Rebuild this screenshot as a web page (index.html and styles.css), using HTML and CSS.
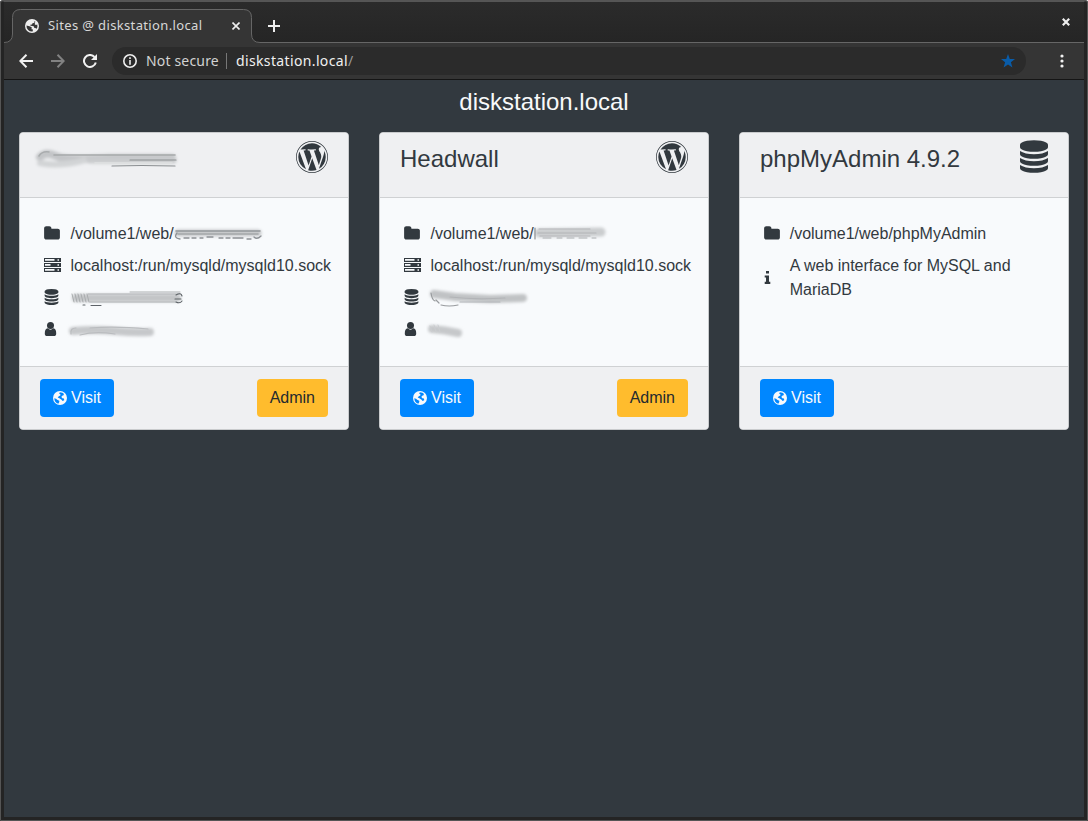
FILE: index.html
```
<!DOCTYPE html>
<html lang="en">
<head>
<meta charset="utf-8">
<title>Sites @ diskstation.local</title>
<link rel="stylesheet" href="styles.css">
</head>
<body>
<svg class="defs" width="0" height="0">
  <defs>
    <filter id="soft" filterUnits="userSpaceOnUse" x="0" y="100" width="700" height="260"><feGaussianBlur stdDeviation="1.7"/></filter>
    <filter id="fine" filterUnits="userSpaceOnUse" x="0" y="100" width="700" height="260"><feGaussianBlur stdDeviation="0.55"/></filter>
    <symbol id="i-globe" viewBox="0 0 14 14"><path fill-rule="evenodd" d="M7 0a7 7 0 1 1 0 14A7 7 0 0 1 7 0zM1.500 6.500L4.500 7.300 6.700 8.300 6.500 10.200 8 10.400 7.600 12.500A5.500 5.500 0 0 1 1.500 6.500zM8.200 1.700L9.400 2.200 9.500 3.800 7.500 4.300 7 5.500 5.300 5.800 5.500 6.800 8.700 7.200 9.400 8.900 11.200 9.200 11.600 9.900A5.500 5.500 0 0 0 12.300 5.500L10.900 6.100 9.700 5.200 10.300 2.600z"/></symbol>
    <symbol id="i-earth" viewBox="0 0 14 14"><path fill-rule="evenodd" d="M7 0a7 7 0 1 1 0 14A7 7 0 0 1 7 0zM1.300 7.200L3 7.700 4.600 9 6.300 9.700 6.300 11 5.300 12.700A6 6 0 0 1 1.300 7.200zM6.800 1.200L9.500 1.700 11 3.100 10.300 4.500 9 4.700 8.400 6 9.300 7.200 11 7.500 11.200 9.300 9.600 10.100 8.300 8.400 6.300 7.300 4.700 6.500 5.800 5.200 7.300 4.600 7.600 3.400 6.200 2.700z"/></symbol>
    <symbol id="i-folder" viewBox="0 0 1664 1792"><path d="M1664 608v704q0 92-66 158t-158 66H224q-92 0-158-66T0 1312V352q0-92 66-158t158-66h320q92 0 158 66t66 158v32h672q92 0 158 66t66 158z"/></symbol>
    <symbol id="i-server" viewBox="0 0 17 14"><path fill-rule="evenodd" d="M0 0h17v4H0zM0 5h17v4H0zM0 10h17v4H0zM1 1v1.800h9.500V1zM1 6v1.800h5.500V6zM1 11v1.800h9.500V11zM13.500 1.200v1.500H15V1.200zM13.500 6.200v1.500H15V6.200zM13.500 11.200v1.500H15v-1.500z"/></symbol>
    <symbol id="i-database" viewBox="0 0 1536 1792"><path d="M768 768q237 0 443-43t325-127v170q0 69-103 128t-280 93.500-385 34.500-385-34.500-280-93.500-103-128V598q119 84 325 127t443 43zm0 768q237 0 443-43t325-127v170q0 69-103 128t-280 93.500-385 34.500-385-34.500-280-93.500-103-128v-170q119 84 325 127t443 43zm0-384q237 0 443-43t325-127v170q0 69-103 128t-280 93.500-385 34.500-385-34.500-280-93.500-103-128V982q119 84 325 127t443 43zM768 0q208 0 385 34.500t280 93.500 103 128v128q0 69-103 128t-280 93.500-385 34.500-385-34.500-280-93.500-103-128V256q0-69 103-128t280-93.500T768 0z"/></symbol>
    <symbol id="i-user" viewBox="0 0 12 14"><circle cx="6" cy="3.500" r="3.500"/><path d="M3.100 6.300Q6 9 8.900 6.300 11.700 6.600 11.700 11.400 11.700 14 9.300 14H2.700Q.3 14 .3 11.400.3 6.600 3.100 6.300z"/></symbol>
    <symbol id="i-info" viewBox="0 0 6 13"><path d="M1.500 0h3v2.600h-3zM.2 4.400h4.300v6.400H5.800V13H.2v-2.200h1.300V6.500H.2z"/></symbol>
    <symbol id="i-wordpress" viewBox="0 0 1792 1792"><path d="M127 896q0-163 67-313l367 1005q-196-95-315-281t-119-411zm1288-39q0 19-2.500 38.500t-10 49.500-11.500 44-17.500 59-17.500 58l-76 256-278-826q46-3 88-8 19-2 26-18.500t-2.500-31-28.500-13.500l-205 10q-75-1-202-10-12-1-20.500 5t-11.500 15-1.500 18.500 9 16.500 19.500 8l80 8 120 328-168 504-280-832q46-3 88-8 19-2 26-18.500t-2.500-31-28.500-13.500l-205 10q-7 0-23-.500t-26-.500q105-160 274.500-253.500t367.500-93.500q147 0 280.500 53t238.500 149h-10q-55 0-92 40.500t-37 95.500q0 12 2 24t4 21.500 8 23 9 21 12 22.500 12.500 21 14.500 24 14 23q63 107 63 212zm-506 106l237 647q1 6 5 11-126 44-255 44-112 0-217-32zm661-436q95 174 95 369 0 209-104 385.500t-279 278.500l235-678q59-169 59-276 0-42-6-79zM896 0q182 0 348 71t286 191 191 286 71 348-71 348-191 286-286 191-348 71-348-71-286-191-191-286T0 896t71-348 191-286T548 71 896 0zm0 1751q173 0 331.500-68t273-182.500 182.500-273 68-331.500-68-331.500-182.500-273-273-182.500T896 41t-331.500 68-273 182.500-182.500 273T41 896t68 331.500 182.500 273 273 182.500 331.500 68z"/></symbol>
  </defs>
</svg>
<div class="window">
  <header class="tabstrip">
    <svg class="tab-shape" width="1080" height="41" viewBox="4 2 1080 41"><path class="tab-fill" d="M4 43V42.500Q12.500 42.500 12.500 34V17.500Q12.500 9.500 20.500 9.500H243.500Q251.500 9.500 251.500 17.500V34Q251.500 42.500 260 42.500V43z"/><path class="tab-line" d="M4 42.500Q12.500 42.500 12.500 34V17.500Q12.500 9.500 20.500 9.500H243.500Q251.500 9.500 251.500 17.500V34Q251.500 42.500 260 42.500H1084"/></svg>
    <div class="tab">
      <svg class="tab-icon"><use href="#i-globe"/></svg>
      <span class="tab-title">Sites @ diskstation.local</span>
      <svg class="tab-close" viewBox="0 0 8 8"><path d="M.5.500l7 7M7.500.500l-7 7"/></svg>
    </div>
    <svg class="new-tab" viewBox="0 0 12 12"><path d="M6 0v12M0 6h12"/></svg>
    <svg class="win-close" viewBox="0 0 8 8"><path d="M.8.800l6.400 6.400M7.200.800L.8 7.200"/></svg>
  </header>
  <nav class="toolbar">
    <svg class="nav-icon" viewBox="0 0 14 14"><path d="M14 7H1.500M7.500.800L1.300 7l6.200 6.200"/></svg>
    <svg class="nav-icon dim" viewBox="0 0 14 14"><path d="M0 7h12.500M6.500.800L12.700 7l-6.200 6.200"/></svg>
    <svg class="nav-icon" viewBox="0 0 14 14"><path d="M11.500 3A6 6 0 1 0 12.800 8.500"/><path class="solid" d="M14 0v6H8z"/></svg>
    <div class="omnibox">
      <svg class="info" viewBox="0 0 14 14"><circle cx="7" cy="7" r="6.200"/><path d="M7 3.200v1.700M7 6v4.800"/></svg>
      <span class="secure">Not secure</span>
      <span class="sep"></span>
      <span class="url">diskstation.local<i>/</i></span>
      <svg class="star" viewBox="0 0 14 14"><path d="M7 0l1.800 5H14L9.900 8.300l1.500 5.200L7 10.400l-4.400 3.100 1.500-5.200L0 5h5.200z"/></svg>
    </div>
    <svg class="menu" viewBox="0 0 4 14"><circle cx="2" cy="2" r="1.600"/><circle cx="2" cy="7" r="1.600"/><circle cx="2" cy="12" r="1.600"/></svg>
  </nav>
  <main class="page">
    <h1>diskstation.local</h1>
    <div class="cards">
      <section class="card">
        <div class="card-head">
          <h2><svg class="smudge title-smudge" width="160" height="36" viewBox="30 141 160 36"><g filter="url(#soft)"><path d="M40 157Q46 151 56 156T110 158H172" stroke="#c3c5c7" stroke-width="8"/><path d="M40 163Q60 167 85 160" stroke="#d2d4d6" stroke-width="6"/><path d="M90 160H173" stroke="#c9cbcd" stroke-width="7"/></g><g filter="url(#fine)"><path d="M39 156Q42 151 49 152" stroke="#a9acae" stroke-width="1.500"/><path d="M54 155H175" stroke="#a6a9ab" stroke-width="1.600"/><path d="M130 160H176M112 166Q140 165 175 166" stroke="#8b8f92" stroke-width="1.200"/><path d="M95 163H172" stroke="#dfe1e2" stroke-width="1.500"/></g></svg></h2>
          <svg class="brand"><use href="#i-wordpress"/></svg>
        </div>
        <div class="card-body">
          <div class="row"><svg class="folder"><use href="#i-folder"/></svg><span>/volume1/web/<svg class="smudge inline-smudge" width="94" height="20" viewBox="172 224 94 20"><g filter="url(#soft)"><path d="M178 233H258" stroke="#c6c8ca" stroke-width="7"/></g><g filter="url(#fine)"><path d="M176 231H260" stroke="#93979a" stroke-width="1.500"/><path d="M178 234H258" stroke="#a5a8aa" stroke-width="1.500"/><path d="M177 233Q173 238 180 239M184 238h5M192 238h4M200 238h3M207 237h6M219 238h4M226 238h4M233 238h10M247 239h4M254 237q3 3 7-1" stroke="#8d9195" stroke-width="1.300"/></g></svg></span></div>
          <div class="row"><svg class="server"><use href="#i-server"/></svg><span>localhost:/run/mysqld/mysqld10.sock</span></div>
          <div class="row"><svg class="db"><use href="#i-database"/></svg><svg class="smudge" width="125" height="24" viewBox="66 286 125 24"><g filter="url(#soft)"><path d="M76 298H177" stroke="#c3c5c7" stroke-width="8"/></g><g filter="url(#fine)"><path d="M72 294l2 8M75 294l2 8M78 294l2 8M81 294l2 8M84 294l2 8M87 294l2 8" stroke="#a9acae" stroke-width="1"/><path d="M88 294H180M90 302H176M130 292H180" stroke="#aeb1b3" stroke-width="1"/><path d="M83 305h2M91 305.500h10M176 295q5-3 6 1M175 299h6M176 302q4 2 6-1" stroke="#5d6267" stroke-width="1.100"/></g></svg></div>
          <div class="row"><svg class="user"><use href="#i-user"/></svg><svg class="smudge" width="125" height="24" viewBox="66 318 125 24"><g filter="url(#soft)"><path d="M73 331Q95 329 115 331T150 332" stroke="#c6c8ca" stroke-width="8"/></g><g filter="url(#fine)"><path d="M71 334Q70 328 76 328M80 335Q95 331 115 334M90 328Q115 326 148 329" stroke="#babcbf" stroke-width="1.200"/></g></svg></div>
        </div>
        <div class="card-foot"><a class="btn visit"><svg><use href="#i-earth"/></svg>Visit</a><a class="btn admin">Admin</a></div>
      </section>
      <section class="card">
        <div class="card-head"><h2>Headwall</h2><svg class="brand"><use href="#i-wordpress"/></svg></div>
        <div class="card-body">
          <div class="row"><svg class="folder"><use href="#i-folder"/></svg><span>/volume1/web/<svg class="smudge inline-smudge" width="94" height="20" viewBox="532 224 94 20"><g filter="url(#soft)"><path d="M539 233L601 232" stroke="#cbcdcf" stroke-width="9"/></g><g filter="url(#fine)"><path d="M535 228v11" stroke="#8b8f92" stroke-width="1.200"/><path d="M539 229H590M538 233H596M540 236H590" stroke="#b3b5b8" stroke-width="1.200"/><path d="M543 238h8M557 238h5M567 238h7M579 238h8M592 238h4" stroke="#aaadb0" stroke-width="1"/></g></svg></span></div>
          <div class="row"><svg class="server"><use href="#i-server"/></svg><span>localhost:/run/mysqld/mysqld10.sock</span></div>
          <div class="row"><svg class="db"><use href="#i-database"/></svg><svg class="smudge" width="125" height="24" viewBox="426 286 125 24"><g filter="url(#soft)"><path d="M434 294L455 297 490 299 523 298" stroke="#c0c2c4" stroke-width="8"/></g><g filter="url(#fine)"><path d="M431 293q1 7 4 8M436 300l3 3M441 305q8 2 17 0" stroke="#989b9e" stroke-width="1.200"/><path d="M450 297Q475 300 505 298M460 302H500" stroke="#b2b4b7" stroke-width="1.200"/></g></svg></div>
          <div class="row"><svg class="user"><use href="#i-user"/></svg><svg class="smudge" width="125" height="24" viewBox="426 318 125 24"><g filter="url(#soft)"><path d="M432 329Q445 330 458 333" stroke="#c6c8ca" stroke-width="8"/></g><g filter="url(#fine)"><path d="M430 326l2 6M434 325l2 7M438 325l2 7" stroke="#cbcdd0" stroke-width="1"/></g></svg></div>
        </div>
        <div class="card-foot"><a class="btn visit"><svg><use href="#i-earth"/></svg>Visit</a><a class="btn admin">Admin</a></div>
      </section>
      <section class="card narrow">
        <div class="card-head"><h2>phpMyAdmin 4.9.2</h2><svg class="brand brand-db"><use href="#i-database"/></svg></div>
        <div class="card-body">
          <div class="row"><svg class="folder"><use href="#i-folder"/></svg><span>/volume1/web/phpMyAdmin</span></div>
          <div class="row"><svg class="note"><use href="#i-info"/></svg><span>A web interface for MySQL and MariaDB</span></div>
        </div>
        <div class="card-foot"><a class="btn visit"><svg><use href="#i-earth"/></svg>Visit</a></div>
      </section>
    </div>
  </main>
</div>
</body>
</html>
```

FILE: styles.css
```
* { box-sizing: border-box; }
body { margin: 0; background: #fff; font: 16px/24px "Liberation Sans", Arial, sans-serif; color: #32393f; }
svg { display: block; flex: none; fill: currentColor; }
.defs { position: absolute; }
.window {
  width: 1088px; height: 821px; display: flex; flex-direction: column;
  border: solid #242424; border-width: 2px 4px 4px; border-top-color: #565656;
  border-radius: 3px 3px 0 0; background: #32393f;
  outline: 1px solid #555; outline-offset: -1px;
}

.tabstrip { position: relative; height: 41px; flex: none; display: flex; background: linear-gradient(#2b2b2b, #252525); color: #eee; }
.tab-shape { position: absolute; left: 0; top: 0; }
.tab-fill { fill: #353535; }
.tab-line { fill: none; stroke: #666; }
.tab { position: relative; width: 240px; margin-left: 8px; padding: 8px 12px 0 13px; display: flex; align-items: center; height: 40px; }
.tab-icon { width: 14px; height: 14px; }
.tab-title { margin-left: 9px; padding-bottom: 2px; font: 13px/18px "Noto Sans", sans-serif; color: #d8d8d8; white-space: nowrap; letter-spacing: .36px; flex: 1; }
.tab-close, .win-close, .new-tab { fill: none; stroke: #eee; stroke-width: 1.6; position: relative; }
.tab-close { width: 8px; height: 8px; }
.new-tab { width: 12px; height: 12px; margin: 18px 0 0 16px; stroke-width: 2; }
.win-close { width: 8px; height: 8px; margin: 16px 14px 0 auto; stroke-width: 2.2; }

.toolbar { height: 37px; flex: none; display: flex; align-items: center; padding-left: 15px; background: #353535; border-bottom: 1px solid #151515; color: #f2f2f2; }
.nav-icon { width: 14px; height: 14px; margin-right: 18px; fill: none; stroke: currentColor; stroke-width: 2; }
.nav-icon .solid { fill: currentColor; stroke: none; }
.dim { color: #828282; }
.omnibox { width: 914px; height: 28px; margin-left: -3px; padding: 0 11px; border-radius: 14px; background: #2b2b2b; display: flex; align-items: center; font: 14px/20px "Noto Sans", sans-serif; }
.info { width: 14px; height: 14px; fill: none; stroke: #eee; stroke-width: 1.6; }
.secure { margin-left: 9px; width: 72px; color: #d2d2d2; white-space: nowrap; letter-spacing: .17px; }
.sep { width: 1px; height: 16px; margin: 0 9px 0 8px; background: #777; }
.url { flex: 1; color: #f0f0f0; letter-spacing: .36px; }
.url i { font-style: normal; color: #999; }
.star { width: 14px; height: 14px; color: #0a5ca8; }
.menu { width: 4px; height: 14px; margin-left: 34px; }

.page { flex: 1; padding: 7px 15px; }
h1 { margin: 0; text-align: center; font-size: 24px; line-height: 29px; font-weight: 400; color: #f8f9fa; }
.cards { display: grid; grid-template-columns: repeat(3, 330px); gap: 30px; margin-top: 16px; }
.card { height: 298px; display: flex; flex-direction: column; border: 1px solid #c9cbcd; border-radius: 4px; background: #f8fafc; overflow: hidden; }
.card-head { height: 65px; display: flex; justify-content: space-between; padding: 8px 20px; background: #eff0f2; border-bottom: 1px solid #cfd1d3; }
h2 { margin: 3px 0 0; font-size: 24px; line-height: 29px; font-weight: 400; }
.brand { width: 32px; height: 32px; }
.brand-db { width: 28px; height: 33px; margin-top: -1px; }
.card-body { flex: 1; padding: 20px 0 0 24px; }
.row { display: grid; grid-template-columns: 26.5px 250px; align-items: center; padding: 4px 0; min-height: 32px; }
.row > span { white-space: nowrap; }
.narrow .row { grid-template-columns: 25.7px 240px; }
.narrow .row > span { white-space: normal; }
.row > svg:first-child { margin-bottom: 2px; }
.folder { width: 16px; height: 17px; }
.server { width: 17px; height: 14px; }
.db { width: 15px; height: 16px; }
.user { width: 13px; height: 14px; }
.note { width: 7px; height: 13px; }
.smudge { fill: none; stroke-linecap: round; margin: -4px 0 -4px -4.5px; }
.inline-smudge { display: inline-block; vertical-align: middle; margin: -4px 0 -2px -2px; }
.title-smudge { margin: -3px 0 0 -10px; }
.card-foot { height: 63px; display: flex; justify-content: space-between; align-items: center; padding: 0 20px; background: #eff0f2; border-top: 1px solid #cfd1d3; }
.btn { height: 38px; padding: 0 13px; border-radius: 4px; display: flex; align-items: center; gap: 4px; }
.btn svg { width: 14px; height: 14px; }
.visit { background: #0087ff; color: #f8fafc; }
.admin { background: #ffbc2d; color: #242a2f; }
```
